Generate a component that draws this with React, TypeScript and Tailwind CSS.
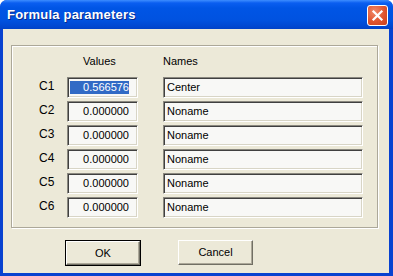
import React from "react";

const font = { fontFamily: '"Liberation Sans", Arial, sans-serif' };

function ValueBox({ v, selected }: { v: string; selected?: boolean }) {
  return (
    <div className="h-[21px] w-[71px] border border-t-[#8a887f] border-l-[#8a887f] border-b-white border-r-white bg-[#f8f8f6] shadow-[inset_1px_1px_0_#404040,inset_-1px_-1px_0_#d8d5c6] flex items-center pl-[2px] pr-[8px] text-[11px] text-black">
      {selected ? (
        <span className="flex-1 h-[13px] bg-[#316ac5] text-white text-right leading-[13px]">{v}</span>
      ) : (
        <span className="flex-1 text-right leading-[13px]">{v}</span>
      )}
    </div>
  );
}

function NameBox({ v }: { v: string }) {
  return (
    <div className="h-[21px] w-[200px] border border-t-[#8a887f] border-l-[#8a887f] border-b-white border-r-white bg-[#f8f8f6] shadow-[inset_1px_1px_0_#404040,inset_-1px_-1px_0_#d8d5c6] flex items-center pl-[3px] text-[11px] text-black leading-[13px]">
      {v}
    </div>
  );
}

export default function App() {
  const rows = [
    ["C1", "0.566576", "Center"],
    ["C2", "0.000000", "Noname"],
    ["C3", "0.000000", "Noname"],
    ["C4", "0.000000", "Noname"],
    ["C5", "0.000000", "Noname"],
    ["C6", "0.000000", "Noname"],
  ];
  return (
    <div className="w-[393px] h-[276px] bg-white" style={font}>
      <div className="w-[393px] h-[276px] flex flex-col rounded-t-[7px] bg-[#0842d0] overflow-hidden">
        {/* Title bar */}
        <div className="h-[29px] shrink-0 flex items-center pl-[7px] pr-[5px] bg-[linear-gradient(to_bottom,#3d8dff_0px,#0a5ef0_3px,#0055e5_8px,#0052e0_20px,#0046cf_27px,#0041c6_29px)]">
          <span className="text-white font-bold text-[13px] tracking-[0.2px] pt-[1px] [text-shadow:1px_1px_0_#0a2a8a]">
            Formula parameters
          </span>
          <div className="ml-auto mt-[1px] w-[21px] h-[21px] rounded-[3px] border border-white bg-[radial-gradient(circle_at_35%_30%,#f08a6a,#e0542e_55%,#c9401c)] flex items-center justify-center">
            <svg width="13" height="13" viewBox="0 0 13 13">
              <path d="M2.5 2.5 L10.5 10.5 M10.5 2.5 L2.5 10.5" stroke="white" strokeWidth="2.2" strokeLinecap="square" />
            </svg>
          </div>
        </div>
        {/* Client area */}
        <div className="flex-1 ml-[3px] mr-[4px] mb-[3px] bg-[#ece9d8] flex flex-col">
          <div className="ml-[8px] mt-[16px] w-[367px] h-[183px] border border-[#aca899] shadow-[1px_1px_0_#ffffff,inset_1px_1px_0_#ffffff] pl-[26px]">
            <div className="h-[30px] mb-[1px] grid grid-cols-[29px_71px_25px_200px] items-center text-[11px] text-black">
              <span />
              <span className="pl-[16px]">Values</span>
              <span />
              <span className="pl-[0px]">Names</span>
            </div>
            <div className="flex flex-col gap-[3px]">
              {rows.map(([c, v, n], i) => (
                <div key={c} className="grid grid-cols-[29px_71px_25px_200px] items-center">
                  <span className="text-[12px] text-black pl-[1px] mb-[4px] leading-[14px]">{c}</span>
                  <ValueBox v={v} selected={i === 0} />
                  <span />
                  <NameBox v={n} />
                </div>
              ))}
            </div>
          </div>
          <div className="mt-[12px] ml-[62px] flex gap-[37px]">
            <div className="w-[76px] h-[26px] border border-black">
              <div className="w-full h-full border border-t-white border-l-white border-b-[#716f64] border-r-[#716f64] shadow-[inset_-1px_-1px_0_#aca899] flex items-center justify-center text-[11px] text-black">
                OK
              </div>
            </div>
            <div className="w-[75px] h-[25px] border border-t-white border-l-white border-b-[#716f64] border-r-[#716f64] shadow-[inset_-1px_-1px_0_#aca899] flex items-center justify-center text-[11px] text-black">
              Cancel
            </div>
          </div>
        </div>
      </div>
    </div>
  );
}
